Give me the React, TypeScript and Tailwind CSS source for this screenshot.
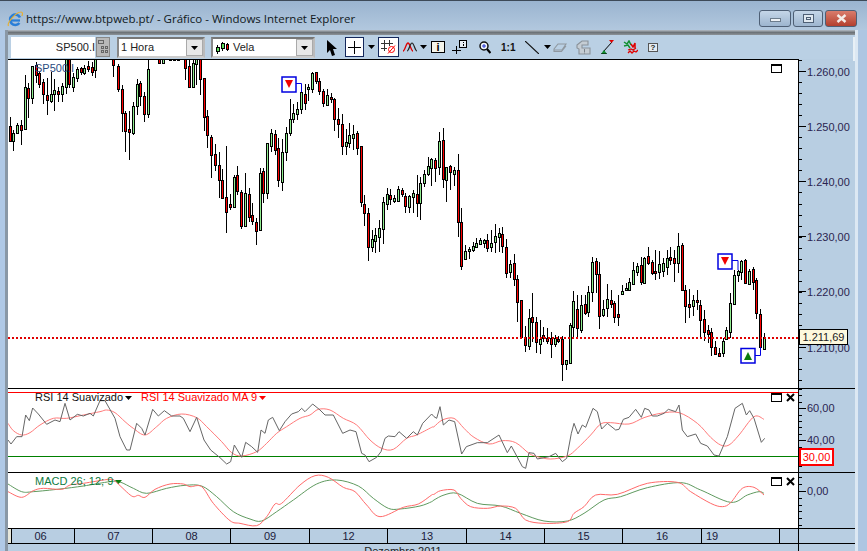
import React from "react"

type C = [number, number, number, number, number, number]

// candles read off three crops: [x, high, low, bodyTop, bodyBottom, green?] in crop pixels
const part1: C[] = [
  [30,185,260,213,257,0],[40,225,288,233,257,1],[52,205,235,210,233,1],[64,195,270,210,224,0],[76,60,225,97,221,1],
  [85,85,190,100,128,0],[97,33,147,34,128,1],[109,22,85,30,60,0],[118,50,100,55,86,0],[130,72,147,82,118,0],
  [142,68,180,120,134,0],[154,50,145,118,137,1],[163,73,168,106,116,1],[175,95,140,108,116,0],[187,85,142,94,116,1],
  [199,0,116,0,97,1],[208,0,100,0,86,0],[220,55,112,67,97,1],[232,35,82,42,70,1],[244,35,60,40,52,0],
  [253,30,60,40,55,1],[265,18,50,33,42,0],[277,20,62,36,52,0],[286,0,68,0,46,1],[340,0,65,0,30,0],
  [355,28,112,33,103,0],[367,90,230,103,173,0],[376,168,290,175,227,0],[388,168,315,223,230,0],[400,140,240,154,233,1],
  [412,72,180,88,154,1],[421,78,152,85,124,0],[433,112,200,124,178,0],[445,0,188,42,176,1],[478,0,28,0,25,0],
  [490,0,28,0,25,1],[511,0,16,0,14,0],[523,0,16,0,14,0],[535,0,16,0,14,0],[556,0,75,0,38,0],
  [568,0,98,34,97,0],[580,0,97,25,95,1],[589,0,90,0,28,1],[601,0,120,0,73,0],[613,68,228,70,185,0],
  [622,165,278,182,241,0],[634,240,368,247,299,0],[646,268,348,298,331,0],[658,290,430,331,376,0],[667,342,432,376,430,0],
  [679,273,533,427,470,0],[691,418,465,448,455,0],[703,360,458,367,457,1],[712,333,420,361,407,0],[724,405,522,411,512,0],
  [736,355,512,415,512,1],[748,400,500,418,485,0],[757,445,510,481,497,0],[769,490,570,500,529,0],[781,340,527,355,526,1],
  [790,340,445,347,413,0],[802,265,432,265,415,1],[814,222,290,235,272,1],[826,225,300,238,284,0],[835,250,395,280,376,0],
]
const part2: C[] = [
  [7,237,392,277,365,1],[19,200,302,220,275,1],[31,118,228,178,220,1],[40,132,190,160,178,1],[52,125,180,148,161,1],
  [64,72,162,97,148,1],[76,72,150,103,130,0],[85,72,122,82,88,1],[97,35,100,40,88,1],[109,36,72,37,62,0],
  [118,55,105,64,92,0],[130,88,140,92,130,0],[142,88,138,106,134,1],[154,98,130,110,116,0],[163,115,212,118,176,0],
  [175,145,235,176,191,0],[187,162,285,193,257,0],[199,208,285,247,257,1],[208,188,265,226,250,1],[220,195,270,223,233,1],
  [232,212,285,220,263,0],[244,258,440,259,427,0],[253,405,498,433,458,0],[265,445,602,460,560,0],[277,510,575,538,562,1],
  [286,503,578,526,544,1],[298,480,575,505,530,1],[310,410,552,427,508,1],[322,385,450,403,433,1],[331,388,435,406,416,0],
  [343,405,430,415,422,1],[355,378,422,388,422,1],[367,385,412,391,403,0],[376,398,458,408,437,0],[388,405,458,409,440,1],
  [400,390,458,400,412,1],[412,345,470,403,428,0],[421,350,480,370,430,1],[433,330,380,343,368,1],[445,292,348,319,341,1],
  [454,295,378,297,325,1],[466,295,365,301,325,0],[478,215,345,243,320,1],[490,205,385,241,356,0],[499,320,425,322,359,1],
  [511,315,390,319,336,0],[523,322,378,331,341,1],[535,282,530,331,485,0],[544,445,630,487,617,0],[556,555,600,574,596,1],
  [568,562,597,568,574,1],[580,545,575,557,569,1],[589,535,565,550,562,1],[601,535,555,541,552,1],[613,537,565,539,548,1],
  [622,522,575,541,563,0],[634,510,575,550,562,1],[646,492,578,529,545,1],[658,505,575,520,532,1],[667,500,578,523,557,0],
]
const part3: C[] = [
  [199,88,205,112,188,0],[211,150,205,162,185,1],[223,133,228,160,207,0],[232,195,335,208,275,0],[244,270,385,271,380,0],
  [256,348,425,380,405,0],[268,298,420,325,407,1],[277,250,395,322,335,0],[289,322,430,337,397,0],[301,330,432,388,402,1],
  [310,352,395,376,385,0],[322,355,403,385,393,0],[334,365,445,383,403,0],[346,375,410,383,402,1],[355,378,400,387,392,0],
  [367,378,512,387,463,0],[379,450,480,451,461,1],[391,340,462,346,458,1],[400,243,380,273,352,1],[412,255,382,298,354,0],
  [424,255,368,285,360,1],[436,255,315,283,308,0],[445,228,320,247,307,1],[457,140,275,156,246,1],[469,145,248,153,193,0],
  [478,155,357,193,317,0],[490,270,320,298,314,1],[502,222,320,267,294,1],[514,240,295,270,281,0],[523,272,338,278,320,0],
  [535,255,348,313,320,0],[547,225,255,244,251,1],[559,220,242,235,241,1],[568,205,240,217,241,1],[580,155,225,181,221,1],
  [592,160,198,169,186,1],[604,140,225,166,215,0],[613,142,220,145,218,1],[625,112,165,139,158,0],[637,150,195,157,190,0],
  [646,120,210,184,190,0],[658,122,208,163,186,1],[670,145,200,160,184,1],[682,120,196,145,170,1],[691,112,165,141,150,0],
  [703,120,215,145,160,0],[715,68,190,109,158,1],[727,98,242,106,241,0],[736,225,338,239,287,0],[748,238,325,283,290,0],
  [760,255,318,271,288,1],[772,240,300,271,277,0],[781,270,382,286,331,0],[793,300,392,328,365,0],[805,345,400,361,371,0],
  [814,355,438,367,412,0],[826,393,435,411,431,0],[838,415,442,430,437,0],[850,385,442,394,430,1],[859,350,388,361,388,1],
  [871,250,385,280,365,1],[883,180,285,196,283,1],[895,180,215,184,194,1],[904,150,210,154,187,1],[916,148,220,151,218,0],
  [928,178,225,184,221,1],[940,170,240,178,215,0],[949,205,328,211,310,0],[961,298,415,313,412,0],[973,370,418,382,416,1],
]

const toPage = (list: C[], ox: number, oy: number) =>
  list.map(([x, h, l, t, b, g]) => ({
    x: Math.round(ox + x / 3) + 0.5,
    hi: oy + h / 3,
    lo: oy + l / 3,
    top: Math.round(oy + t / 3) + 0.5,
    bot: Math.round(oy + b / 3) + 0.5,
    green: g === 1,
  }))

const candles = [...toPage(part1, 0, 55), ...toPage(part2, 280, 60), ...toPage(part3, 440, 210)]

// crop pixels -> page pixels, left half comes from one crop and right half from another
const pts = (a: number[], b: number[]) => {
  const out: [number, number][] = []
  for (let i = 0; i < a.length; i += 2) out.push([a[i] / 3, 380 + a[i + 1] / 3])
  for (let i = 0; i < b.length; i += 2) out.push([434 + b[i] / 3, 320 + b[i + 1] / 3])
  return out
}

// catmull-rom through the points, the averages in the picture are soft curves
const smooth = (p: [number, number][]) => {
  let d = "M" + p[0][0] + " " + p[0][1]
  for (let i = 0; i < p.length - 1; i++) {
    const p0 = p[Math.max(i - 1, 0)]
    const p1 = p[i]
    const p2 = p[i + 1]
    const p3 = p[Math.min(i + 2, p.length - 1)]
    d += " C" + (p1[0] + (p2[0] - p0[0]) / 6) + " " + (p1[1] + (p2[1] - p0[1]) / 6) + " " + (p2[0] - (p3[0] - p1[0]) / 6) + " " + (p2[1] - (p3[1] - p1[1]) / 6) + " " + p2[0] + " " + p2[1]
  }
  return d
}

const rsi = pts(
  [24,180,33,192,50,170,66,170,77,105,88,122,98,84,115,102,140,133,165,120,180,125,195,70,210,120,232,103,250,108,270,100,280,108,300,62,315,62,345,115,360,170,380,210,390,210,410,130,425,145,435,165,458,88,475,108,493,92,515,108,540,108,550,115,570,155,590,112,612,180,632,210,660,233,680,252,692,245,703,195,725,232,737,187,755,200,773,217,783,150,795,160,805,120,818,112,838,152,855,125,875,102,895,95,905,85,915,95,938,72,960,90,975,105,1000,105,1028,160,1050,150,1068,155,1085,220,1095,225,1107,245,1130,232,1143,215,1155,175,1165,168,1185,170,1197,155,1220,175,1240,155,1252,165,1268,130,1295,102],
  [0,290,8,295,18,260,28,315,45,300,62,305,83,402,97,380,130,368,160,368,195,345,220,398,232,378,265,440,275,445,285,398,300,400,310,417,345,410,365,400,385,425,398,415,412,340,420,310,432,342,445,315,455,322,477,265,490,275,503,327,520,310,545,330,555,328,568,298,585,292,605,268,622,292,632,265,645,270,655,288,670,288,690,280,703,268,725,275,735,255,745,330,760,350,785,342,800,370,820,378,840,405,855,408,880,350,903,265,925,250,937,285,947,272,960,295,982,367,992,355],
).map((p) => p.join(",")).join(" ")
const rsiMa = pts(
  [24,130,40,152,65,165,90,158,120,135,160,115,200,115,250,105,300,95,320,90,345,98,375,125,400,145,435,165,470,140,500,115,545,102,590,113,620,140,665,185,695,218,725,228,770,215,800,190,830,160,860,140,900,115,930,105,955,88,990,90,1030,115,1070,135,1110,180,1145,205,1180,208,1220,175,1250,165,1295,142],
  [0,320,25,300,60,295,90,325,120,352,165,372,205,362,245,368,285,400,310,410,350,417,400,408,430,385,470,345,500,312,530,308,585,312,630,293,680,280,735,278,790,310,830,352,860,375,885,375,915,345,960,290,990,298],
)
const macd = pts(
  [24,335,65,352,100,332,130,325,185,328,210,315,250,310,330,298,350,308,395,348,415,346,435,352,465,328,510,312,550,312,570,320,605,320,640,370,690,422,720,430,770,437,800,410,825,372,845,370,900,315,945,287,985,292,1030,322,1065,335,1100,375,1140,410,1210,382,1255,372,1295,345],
  [0,523,20,512,60,510,80,535,110,560,160,565,200,558,245,565,275,600,330,610,400,605,420,580,450,560,485,525,550,523,640,490,730,487,770,515,830,550,865,560,890,548,925,505,960,502,990,525],
)
const macdSignal = pts(
  [24,312,65,335,100,335,180,327,250,318,330,305,360,306,400,325,440,340,500,325,555,316,605,318,650,350,700,395,750,417,785,423,830,395,880,360,950,312,1010,300,1075,318,1120,355,1165,385,1200,387,1260,378,1295,365],
  [0,540,30,525,70,520,130,550,200,558,260,580,330,603,400,603,450,580,510,540,560,530,640,503,740,488,800,510,890,547,940,525,975,515,990,520],
)

const days = [
  { label: "06", w: "w-[63px] pr-[5px]" },
  { label: "07", w: "w-[78px]" },
  { label: "08", w: "w-[78px]" },
  { label: "09", w: "w-[79px]" },
  { label: "12", w: "w-[78px]" },
  { label: "13", w: "w-[79px]" },
  { label: "14", w: "w-[78px]" },
  { label: "15", w: "w-[78px]" },
  { label: "16", w: "w-[79px]" },
]

function Caret() {
  return (
    <svg width="7" height="4" viewBox="0 0 7 4" className="shrink-0">
      <path d="M0 0h7L3.5 4z" fill="#000" />
    </svg>
  )
}

function Select({ children, w }: { children: React.ReactNode; w: string }) {
  return (
    <div className={"flex h-[21px] items-center justify-between border-2 border-t-[#777] border-l-[#888] border-r-[#bbb] border-b-[#ccc] bg-white text-[#222] " + w}>
      {children}
      <div className="flex h-[17px] w-[17px] items-center justify-center border border-[#aaa] bg-[#e8e8e8]">
        <Caret />
      </div>
    </div>
  )
}

function WindowButton({ children, w, tone }: { children: React.ReactNode; w: string; tone: string }) {
  return (
    <div className={"flex h-[17px] items-center justify-center rounded-[3px] border border-[#4e5f75] " + w + " " + tone}>
      {children}
    </div>
  )
}

function PaneButtons({ close }: { close?: boolean }) {
  return (
    <div className="absolute right-[3px] top-[4px] flex items-center gap-[4px]">
      <svg width="11" height="9" viewBox="0 0 11 9" className={close ? "" : "mr-[13px]"}>
        <rect x="0.5" y="0.5" width="10" height="8" fill="#fff" stroke="#000" />
        <rect x="0" y="0" width="11" height="2" fill="#000" />
      </svg>
      {close && (
        <svg width="9" height="9" viewBox="0 0 9 9">
          <path d="M1 1l7 7M8 1L1 8" stroke="#000" strokeWidth="2" />
        </svg>
      )}
    </div>
  )
}

function Ticks({ from, to, step, major, y0 }: { from: number; to: number; step: number; major: number[]; y0: number }) {
  const ys: number[] = []
  for (let y = from; y < to; y += step) ys.push(y)
  return (
    <svg width="8" height={to - y0} viewBox={"0 " + y0 + " 8 " + (to - y0)} className="absolute left-0 top-0" shapeRendering="crispEdges">
      {ys.map((y) => (
        <line key={y} x1="0" x2="3" y1={Math.round(y) + 0.5} y2={Math.round(y) + 0.5} stroke="#000" />
      ))}
      {major.map((y) => (
        <line key={y} x1="0" x2="7" y1={y + 0.5} y2={y + 0.5} stroke="#000" />
      ))}
    </svg>
  )
}

function AxisLabel({ top, children }: { top: string; children: React.ReactNode }) {
  return <span className={"absolute left-[8px] text-[11px] leading-[12px] text-[#2a2450] " + top}>{children}</span>
}

export default function App() {
  return (
    <div className="flex h-[551px] w-[867px] flex-col overflow-hidden bg-[#b8cee2] font-['Liberation_Sans',sans-serif]">
      {/* title bar */}
      <div className="flex h-[30px] shrink-0 items-center justify-between border-t border-t-[#3d4a58] bg-gradient-to-b from-[#9ab4d0] to-[#b2c8de] pl-[7px] pr-[10px]">
        <div className="mt-[6px] flex items-center gap-[3px]">
          <svg width="16" height="16" viewBox="0 0 16 16">
            <path d="M3 9.5h10" stroke="#2a7fd8" strokeWidth="2.2" />
            <path d="M13 6.5A5.2 5.2 0 1 0 12.4 12" fill="none" stroke="#2a7fd8" strokeWidth="2.6" />
            <path d="M1.5 15C-.5 12 9 1 14 1c1.8 0 1.8 2 .8 4" fill="none" stroke="#e8b030" strokeWidth="1.2" />
          </svg>
          <span className="text-[11.5px] leading-none text-[#101820] font-['Open_Sans',sans-serif]">https://www.btpweb.pt/ - Gráfico - Windows Internet Explorer</span>
        </div>
        <div className="mt-[6px] flex items-center gap-[2px]">
          <WindowButton w="w-[32px]" tone="bg-gradient-to-b from-[#c5d6e8] to-[#9db5cf]">
            <div className="mt-[3px] h-[4px] w-[11px] border border-[#6c7c8c] bg-[#eef2f6]" />
          </WindowButton>
          <WindowButton w="w-[30px]" tone="bg-gradient-to-b from-[#c5d6e8] to-[#9db5cf]">
            <div className="flex h-[9px] w-[11px] items-center justify-center border border-[#4e5f75] bg-[#dfe8f0]">
              <div className="h-[3px] w-[5px] border border-[#4e5f75]" />
            </div>
          </WindowButton>
          <WindowButton w="w-[32px]" tone="bg-gradient-to-b from-[#d97c6c] to-[#b33f2e]">
            <svg width="11" height="9" viewBox="0 0 11 9">
              <path d="M1.5 1l8 7M9.5 1l-8 7" stroke="#f4ece8" strokeWidth="2.4" />
            </svg>
          </WindowButton>
        </div>
      </div>

      <div className="flex min-h-0 flex-1">
        <div className="w-[5px] shrink-0 bg-[#b0c9e6]" />
        <div className="w-[3px] shrink-0 bg-[#8a98a6]" />

        <div className="flex w-[847px] shrink-0 flex-col">
          <div className="h-[5px] shrink-0 bg-gradient-to-b from-[#b5bdc5] via-[#6d7378] to-[#8d9398]" />

          {/* toolbar */}
          <div className="flex h-[24px] shrink-0 items-start bg-[#bad0e4] pl-[3px] pt-[2px] text-[11px]">
            <div className="flex h-[21px] w-[84px] items-center justify-end bg-white text-[11px] text-[#222]">SP500.I</div>
            <div className="ml-[1px] flex h-[20px] w-[14px] items-center justify-center border border-[#888] bg-[#b9b9b9]">
              <svg width="10" height="14" viewBox="0 0 10 14" shapeRendering="crispEdges">
                <path d="M0 .5h5v3H0zM3 6.5h2v2H3zM7 6.5h2v2H7zM3 10.5h2v2H3zM7 10.5h2v2H7z" fill="none" stroke="#666" />
              </svg>
            </div>
            <Select w="ml-[7px] w-[88px]">
              <span className="pl-[2px]">1 Hora</span>
            </Select>
            <Select w="ml-[6px] w-[104px]">
              <span className="flex items-center gap-[4px] pl-[2px]">
                <svg width="14" height="12" viewBox="0 0 14 12" shapeRendering="crispEdges">
                  <path d="M2.5 3v9M7.5 0v9M12.5 1v8" stroke="#000" />
                  <rect x="1" y="5.5" width="3" height="4" fill="#5ee05e" stroke="#000" />
                  <rect x="6" y="1.5" width="3" height="5" fill="#5ee05e" stroke="#000" />
                  <rect x="11" y="2.5" width="2" height="5" fill="#f00" stroke="#000" />
                </svg>
                Vela
              </span>
            </Select>

            <svg width="11" height="17" viewBox="0 0 11 17" className="ml-[11px] mt-[3px]">
              <path d="M1 0v13l3-3 2 6 3-1-2-6h4z" fill="#000" />
            </svg>
            <div className="ml-[8px] flex h-[20px] w-[19px] items-center justify-center border border-[#14285c] bg-white">
              <svg width="13" height="13" viewBox="0 0 13 13" shapeRendering="crispEdges">
                <path d="M6.5 0v13M0 6.5h13" stroke="#000" />
              </svg>
            </div>
            <div className="ml-[4px] mt-[8px]"><Caret /></div>
            <div className="ml-[3px] flex h-[20px] w-[21px] items-center justify-center border border-[#14285c] bg-white">
              <svg width="17" height="16" viewBox="0 0 17 16">
                <path d="M4.5 1v11M9.5 1v6M1 4.5h12M1 9.5h6" stroke="#333" shapeRendering="crispEdges" />
                <circle cx="11.5" cy="10.5" r="3" fill="none" stroke="#f00" />
                <path d="M8 14.5L15 6.5" stroke="#f00" />
              </svg>
            </div>
            <svg width="14" height="12" viewBox="0 0 14 12" className="ml-[4px] mt-[4px]">
              <path d="M0 10C2 10 3 2 5 2s3 8 5 8" fill="none" stroke="#d00" strokeWidth="1.3" />
              <path d="M4 10c2 0 3-8 5-8s3 8 5 8" fill="none" stroke="#222" strokeWidth="1.2" />
            </svg>
            <div className="ml-[3px] mt-[8px]"><Caret /></div>
            <div className="ml-[4px] mt-[4px] flex h-[12px] w-[14px] items-center justify-center border border-[#000] bg-[#f4f4ea] text-[11px] font-bold leading-none text-black">i</div>

            <svg width="15" height="14" viewBox="0 0 15 14" className="ml-[7px] mt-[3px]" shapeRendering="crispEdges">
              <path d="M4.5 6v8M0 10.5h9" stroke="#000" />
              <rect x="7.5" y="0.5" width="7" height="7" fill="#e8eef4" stroke="#000" />
              <path d="M11 2h1v1h-1zM11 4h1v2h-1z" fill="#000" />
            </svg>
            <svg width="12" height="13" viewBox="0 0 12 13" className="ml-[12px] mt-[4px]">
              <circle cx="5" cy="5" r="4" fill="#eef4fa" stroke="#111" strokeWidth="1.5" />
              <path d="M3 5h4M5 3v4" stroke="#2030d0" />
              <path d="M8 8l3.5 4" stroke="#000" strokeWidth="2.2" />
            </svg>
            <span className="ml-[10px] mt-[5px] w-[13px] text-[10px] font-bold leading-[11px] text-[#111]">1:1</span>
            <svg width="14" height="13" viewBox="0 0 14 13" className="ml-[11px] mt-[4px]">
              <path d="M0 0l14 13" stroke="#111" strokeWidth="1.2" />
            </svg>
            <div className="ml-[5px] mt-[8px]"><Caret /></div>
            <svg width="14" height="11" viewBox="0 0 14 11" className="ml-[2px] mt-[5px]">
              <path d="M1 7l4-5h8l-4 6H1zM1 7v2.5h7.5L13 4" fill="none" stroke="#8f979f" strokeWidth="1.1" />
            </svg>
            <svg width="15" height="15" viewBox="0 0 15 15" className="ml-[9px] mt-[3px]">
              <path d="M1 5l5-4h6v4H6v3h8v6H3v-5L1 8z" fill="#c5cdd4" stroke="#8a9299" strokeWidth="1.1" />
              <path d="M8.5 9v3M8 13h1" stroke="#7a828a" />
            </svg>
            <svg width="13" height="14" viewBox="0 0 13 14" className="ml-[10px] mt-[3px]">
              <path d="M2 12L11 2" stroke="#000" />
              <path d="M8 0h5l-2.5 3z" fill="#e00000" />
              <path d="M0 14h6L3 10z" fill="#109030" />
              <path d="M0 14h6" stroke="#000" />
            </svg>
            <svg width="15" height="14" viewBox="0 0 15 14" className="ml-[9px] mt-[3px]">
              <path d="M1 2l3 2 2-3 2 4" fill="none" stroke="#109030" strokeWidth="1.5" />
              <path d="M1 6l4-1 2 3" fill="none" stroke="#109030" strokeWidth="1.5" />
              <path d="M8 4l2 3 2-4 0 5" fill="none" stroke="#e00000" strokeWidth="1.5" />
              <path d="M5 13l2-2 2 2 2-2 2 1 2-2M5 10l3-1 2 1 3-2" fill="none" stroke="#e00000" strokeWidth="1.3" />
            </svg>
            <div className="ml-[10px] mt-[6px] flex h-[9px] w-[10px] items-center justify-center border border-[#555] bg-[#e4ecf2] text-[8px] font-bold leading-none text-[#222]">?</div>
            <div className="ml-auto h-[24px] w-[2px] bg-[#e8f0f6]" />
          </div>

          {/* price pane */}
          <div className="flex h-[329px] shrink-0">
            <div className="relative w-[790px] border-t border-black bg-white">
              <svg width="790" height="328" viewBox="8 60 790 328" className="block">
                <g shapeRendering="crispEdges">
                  {candles.map((c, i) => (
                    <g key={i}>
                      <line x1={c.x} x2={c.x} y1={c.hi} y2={c.lo} stroke="#000" />
                      <rect x={c.x - 1} y={c.top} width={2} height={Math.max(c.bot - c.top, 1)} fill={c.green ? "#90ee90" : "#ff0000"} stroke="#000" />
                    </g>
                  ))}
                  <line x1="8" x2="798" y1="338" y2="338" stroke="#e00000" strokeWidth="2" strokeDasharray="2 2" />
                </g>
                <g fill="#fff" stroke="#0000e0" strokeWidth="1.5">
                  <path d="M296 83.5h5.5V92" fill="none" strokeWidth="1" />
                  <rect x="282" y="77" width="14" height="15" />
                  <path d="M732 260.5h6V270" fill="none" strokeWidth="1" />
                  <rect x="718" y="254" width="14" height="15" />
                  <path d="M755 355.5h5.5V347" fill="none" strokeWidth="1" />
                  <rect x="741" y="348.5" width="14" height="14.5" />
                </g>
                <path d="M285 80h8l-4 8z" fill="#f00000" />
                <path d="M721 257h8l-4 8z" fill="#f00000" />
                <path d="M744 360h8l-4-8z" fill="#0c7a0c" />
              </svg>
              <span className="absolute left-[27px] top-[2px] text-[11px] leading-[13px] text-[#2a4a80]">SP500.I</span>
              <PaneButtons />
            </div>
            <div className="relative w-[57px] border-l border-black">
              <Ticks y0={60} from={61} to={388} step={11.04} major={[72, 127, 182, 237, 292, 348]} />
              <AxisLabel top="top-[7px]">1.260,00</AxisLabel>
              <AxisLabel top="top-[62px]">1.250,00</AxisLabel>
              <AxisLabel top="top-[117px]">1.240,00</AxisLabel>
              <AxisLabel top="top-[172px]">1.230,00</AxisLabel>
              <AxisLabel top="top-[227px]">1.220,00</AxisLabel>
              <AxisLabel top="top-[283px]">1.210,00</AxisLabel>
              <div className="absolute left-0 top-[270px] flex h-[16px] w-[49px] items-center justify-center border border-black bg-[#fdf9dd] text-[11px] leading-none text-[#222]">1.211,69</div>
            </div>
          </div>

          {/* RSI pane */}
          <div className="flex h-[84px] shrink-0 border-t border-black">
            <div className="relative w-[790px] bg-white">
              <svg width="790" height="83" viewBox="8 389 790 83" className="block">
                <line x1="8" x2="798" y1="392.5" y2="392.5" stroke="#f00" shapeRendering="crispEdges" />
                <line x1="8" x2="798" y1="456.5" y2="456.5" stroke="#008000" shapeRendering="crispEdges" />
                <path d={smooth(rsiMa)} fill="none" stroke="#ff7a7a" strokeWidth="1" />
                <polyline points={rsi} fill="none" stroke="#666" strokeWidth="1" />
              </svg>
              <div className="absolute left-[27px] top-[2px] flex items-center gap-[2px] text-[11px] leading-[13px] text-[#111]">
                RSI 14 Suavizado
                <Caret />
              </div>
              <div className="absolute left-[133px] top-[2px] flex items-center gap-[2px] text-[11px] leading-[13px] text-[#f00]">
                RSI 14 Suavizado MA 9
                <svg width="7" height="4" viewBox="0 0 7 4"><path d="M0 0h7L3.5 4z" fill="#f00" /></svg>
              </div>
              <PaneButtons close />
            </div>
            <div className="relative w-[57px] border-l border-black">
              <Ticks y0={389} from={389} to={472} step={6.4} major={[408, 440]} />
              <AxisLabel top="top-[13px]">60,00</AxisLabel>
              <AxisLabel top="top-[45px]">40,00</AxisLabel>
              <div className="absolute left-0 top-[59px] flex h-[18px] w-[35px] items-center justify-center border-2 border-[#f00] bg-white text-[11px] leading-none text-[#f00]">30,00</div>
            </div>
          </div>

          {/* MACD pane */}
          <div className="flex h-[56px] shrink-0 border-t border-black">
            <div className="relative w-[790px] bg-white">
              <svg width="790" height="55" viewBox="8 473 790 55" className="block">
                <path d={smooth(macdSignal)} fill="none" stroke="#5f9a5f" strokeWidth="1" />
                <path d={smooth(macd)} fill="none" stroke="#ff6a6a" strokeWidth="1" />
              </svg>
              <div className="absolute left-[27px] top-[2px] flex items-center gap-[2px] text-[11px] leading-[13px] text-[#0d7a3e]">
                MACD 26; 12; 9
                <svg width="7" height="4" viewBox="0 0 7 4"><path d="M0 0h7L3.5 4z" fill="#0d7a0d" /></svg>
              </div>
              <PaneButtons close />
            </div>
            <div className="relative w-[57px] border-l border-black">
              <Ticks y0={473} from={477} to={528} step={6.9} major={[491]} />
              <AxisLabel top="top-[12px]">0,00</AxisLabel>
            </div>
          </div>

          {/* day axis */}
          <div className="flex h-[16px] shrink-0 border-y border-black">
            <div className="flex w-[790px] text-[11px] leading-[14px] text-[#1a1a3a]">
              <div className="w-[3px] bg-[#e6e6da]" />
              {days.map((d) => (
                <div key={d.label} className={"border-l border-black text-center " + d.w}>{d.label}</div>
              ))}
              <div className="w-[78px] border-l border-black pl-[4px]">19</div>
              <div className="flex-1 border-l border-black" />
            </div>
            <div className="w-[57px] border-l border-black" />
          </div>
          <div className="flex h-[7px] shrink-0 overflow-hidden">
            <div className="w-[790px] text-center text-[11px] leading-[14px] text-[#222]">Dezembro 2011</div>
            <div className="w-[57px] border-l border-black" />
          </div>
        </div>

        <div className="w-[3px] shrink-0 bg-[#dce8f3]" />
        <div className="flex-1 bg-[#adc6e2]" />
      </div>
    </div>
  )
}
